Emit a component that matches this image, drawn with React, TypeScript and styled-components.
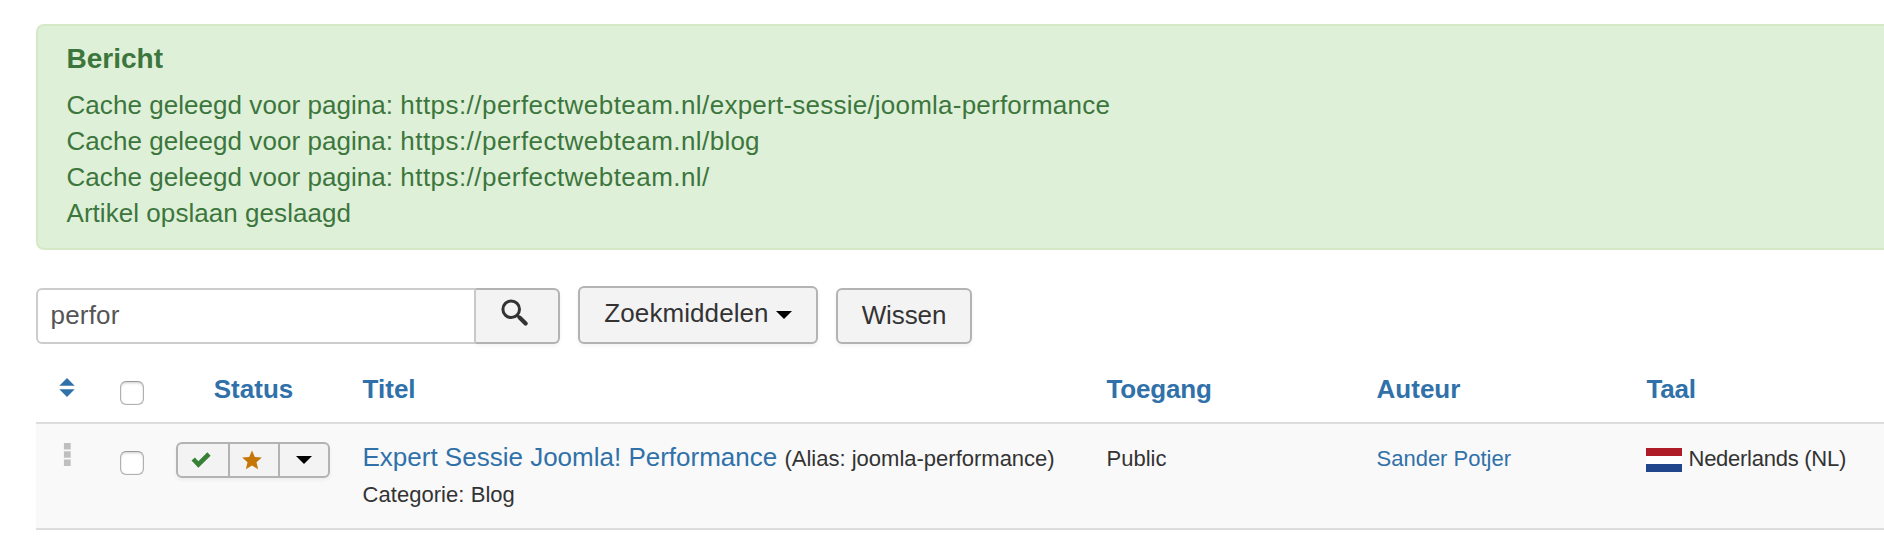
import React from "react";
import styled, { createGlobalStyle, css } from "styled-components";

const GlobalStyle = createGlobalStyle`
  *, *::before, *::after { box-sizing: border-box; }
  body {
    margin: 0;
    background: #fff;
    color: #333;
    font: 26px/36px "Liberation Sans", Arial, sans-serif;
    overflow: hidden;
  }
`;

const Page = styled.main`
  height: 560px;
  padding: 24px 0 0 36px;
  overflow: hidden;
  white-space: nowrap;
`;

const Alert = styled.section`
  height: 226px;
  padding: 15px 28.5px;
  border: 2px solid #d6e9c6;
  border-right: 0;
  border-radius: 8px 0 0 8px;
  background: #dff0d8;
  color: #3c763d;
`;

const AlertHeading = styled.h4`
  margin: 0 0 10px;
  font-size: 28px;
  line-height: 36px;
`;

const AlertLine = styled.div`
  height: 36px;
`;

const Spaced = styled.span<{ $by: number }>`
  letter-spacing: ${({ $by }) => $by}px;
`;

const Toolbar = styled.div`
  display: flex;
  align-items: flex-end;
  gap: 18px;
  height: 58px;
  margin-top: 36px;
`;

const SearchGroup = styled.div`
  display: flex;
`;

const SearchInput = styled.input`
  width: 440px;
  height: 56px;
  padding: 0 12px 2px 12.5px;
  border: 2px solid #ccc;
  border-radius: 6px 0 0 6px;
  outline: 0;
  background: #fff;
  color: #555;
  font: inherit;
  letter-spacing: 0.2px;
`;

const buttonSkin = css`
  border: 2px solid #b3b3b3;
  background: #f3f3f3;
  box-shadow: 0 2px 4px rgba(0, 0, 0, 0.05);
  color: #333;
  font: inherit;
`;

const Button = styled.button<{ $width: number; $height?: number; $lift?: number }>`
  ${buttonSkin}
  display: flex;
  align-items: center;
  justify-content: center;
  gap: 7px;
  width: ${({ $width }) => $width}px;
  height: ${({ $height = 56 }) => $height}px;
  padding: 0 0 ${({ $lift = 2 }) => $lift}px;
  border-radius: 6px;
`;

const SearchButton = styled.button`
  ${buttonSkin}
  display: flex;
  align-items: flex-start;
  width: 84px;
  height: 56px;
  padding: 9px 0 0 25px;
  border-left: 0;
  border-radius: 0 6px 6px 0;
`;

const Icon = styled.svg`
  display: block;
  flex: none;
`;

const Row = styled.div<{ $body?: boolean }>`
  display: grid;
  grid-template-columns: 62px 68px 174px 744px 270px 270px 1fr;
  height: ${({ $body }) => ($body ? 106 : 80)}px;
  border-bottom: 2px solid #ddd;
  background: ${({ $body }) => ($body ? "#f9f9f9" : "#fff")};
`;

const HeadCell = styled.div<{ $center?: boolean }>`
  padding: 27px 0 0 ${({ $center }) => ($center ? 1 : 22.6)}px;
  text-align: ${({ $center }) => ($center ? "center" : "left")};
  color: #3071a9;
  font-weight: bold;
`;

const IconCell = styled.div<{ $top: number }>`
  display: flex;
  justify-content: center;
  align-items: flex-start;
  padding-top: ${({ $top }) => $top}px;
`;

const TitleCell = styled.div`
  padding: 15px 0 0 22.5px;
`;

const Cell = styled.div`
  padding: 17px 0 0 22.5px;
  font-size: 22px;
`;

const LanguageCell = styled(Cell)`
  display: flex;
  align-items: flex-start;
  gap: 6.5px;
  padding-left: 22px;
`;

const Link = styled.a`
  color: #3071a9;
`;

const Small = styled.small`
  font-size: 22px;
`;

const Category = styled.div`
  font-size: 22px;
  letter-spacing: 0.05px;
`;

const Checkbox = styled.input.attrs({ type: "checkbox" })`
  appearance: none;
  width: 24px;
  height: 24px;
  margin: 0;
  border: 1px solid #b0b0b0;
  border-top-color: #999;
  border-radius: 6px;
  background: #fff;
  box-shadow: inset 0 0 1px rgba(0, 0, 0, 0.35), inset 0 2px 2px rgba(0, 0, 0, 0.1);
`;

const StatusGroup = styled.div`
  ${buttonSkin}
  display: flex;
  width: 154px;
  height: 36px;
  border-radius: 6px;
`;

const StatusButton = styled.button<{ $width: number; $inset?: number }>`
  display: flex;
  align-items: center;
  justify-content: center;
  width: ${({ $width }) => $width}px;
  padding: 0 ${({ $inset = 0 }) => $inset}px 0 0;
  border: 0;
  background: transparent;
  & + & { border-left: 2px solid #b3b3b3; }
`;

const Flag = styled.svg`
  display: block;
  width: 36px;
  height: 24px;
  margin-top: 7px;
`;

const Caret = ({ drop = 0 }: { drop?: number }) => (
  <Icon width="16" height={8 + drop * 2} viewBox={`0 ${-drop * 2} 16 ${8 + drop * 2}`}>
    <path d="M0 0H16L8 8Z" fill="#000" />
  </Icon>
);

const messages = ["expert-sessie/joomla-performance", "blog", ""];

export default function App() {
  return (
    <>
      <GlobalStyle />
      <Page>
        <Alert>
          <AlertHeading>Bericht</AlertHeading>
          {messages.map((path) => (
            <AlertLine key={path}>
              <Spaced $by={0.05}>Cache geleegd voor pagina: </Spaced>
              <Spaced $by={0.45}>https://perfectwebteam.nl/</Spaced>
              <Spaced $by={0.23}>{path}</Spaced>
            </AlertLine>
          ))}
          <AlertLine><Spaced $by={0.05}>Artikel opslaan geslaagd</Spaced></AlertLine>
        </Alert>

        <Toolbar>
          <SearchGroup>
            <SearchInput defaultValue="perfor" />
            <SearchButton aria-label="Zoeken">
              <Icon width="27" height="28" viewBox="0 0 27 28" fill="none" stroke="#333">
                <circle cx="10.2" cy="10.3" r="8.3" strokeWidth="3" />
                <path d="M16 16.2L18.4 18.4" strokeWidth="2.8" />
                <path d="M18.8 18.8L24.6 24.5" strokeWidth="4.2" strokeLinecap="round" />
              </Icon>
            </SearchButton>
          </SearchGroup>
          <Button $width={240} $height={58} $lift={4}>
            <Spaced $by={0.08}>Zoekmiddelen</Spaced>
            <Caret drop={2} />
          </Button>
          <Button $width={136}>
            <Spaced $by={-0.1}>Wissen</Spaced>
          </Button>
        </Toolbar>

        <Row>
          <IconCell $top={34}>
            <Icon width="16" height="20" viewBox="0 0 16 20" fill="#3071a9">
              <path d="M8 0L15.7 7.7H.3ZM.3 11.3H15.7L8 19Z" />
            </Icon>
          </IconCell>
          <IconCell $top={37}>
            <Checkbox />
          </IconCell>
          <HeadCell $center>Status</HeadCell>
          <HeadCell>Titel</HeadCell>
          <HeadCell><Spaced $by={-0.2}>Toegang</Spaced></HeadCell>
          <HeadCell>Auteur</HeadCell>
          <HeadCell><Spaced $by={-0.25}>Taal</Spaced></HeadCell>
        </Row>

        <Row $body>
          <IconCell $top={19}>
            <Icon width="8" height="24" viewBox="0 0 8 24" fill="#bfbfbf">
              <path d="M.9 0H7.7V6.6H.9ZM.9 8.2H7.7V14.8H.9ZM.9 16.4H7.7V23H.9Z" />
            </Icon>
          </IconCell>
          <IconCell $top={27}>
            <Checkbox />
          </IconCell>
          <IconCell $top={18}>
            <StatusGroup>
              <StatusButton $width={50} $inset={5} aria-label="Gepubliceerd">
                <Icon width="20" height="16" viewBox="0 0 20 16">
                  <path d="M2.2 7L7.4 12.5L18 2" fill="none" stroke="#378137" strokeWidth="4.6" />
                </Icon>
              </StatusButton>
              <StatusButton $width={50} $inset={5} aria-label="Speciaal">
                <Icon width="20" height="20" viewBox="0 0 20 20">
                  <path d="M10 .4L12.8 7L19.8 7.6L14.5 12.2L16.1 19.2L10 15.5L3.9 19.2L5.5 12.2L.2 7.6L7.2 7Z" fill="#c67605" />
                </Icon>
              </StatusButton>
              <StatusButton $width={50} aria-label="Acties">
                <Caret />
              </StatusButton>
            </StatusGroup>
          </IconCell>
          <TitleCell>
            <Link>Expert Sessie Joomla! Performance</Link>{" "}
            <Small>(Alias: joomla-performance)</Small>
            <Category>Categorie: Blog</Category>
          </TitleCell>
          <Cell>Public</Cell>
          <Cell><Link>Sander Potjer</Link></Cell>
          <LanguageCell>
            <Flag viewBox="0 0 36 24">
              <path d="M0 0H36V8H0Z" fill="#ae1c28" />
              <path d="M0 8H36V16H0Z" fill="#fff" />
              <path d="M0 16H36V24H0Z" fill="#21468b" />
            </Flag>
            <Spaced $by={-0.26}>Nederlands (NL)</Spaced>
          </LanguageCell>
        </Row>
      </Page>
    </>
  );
}
